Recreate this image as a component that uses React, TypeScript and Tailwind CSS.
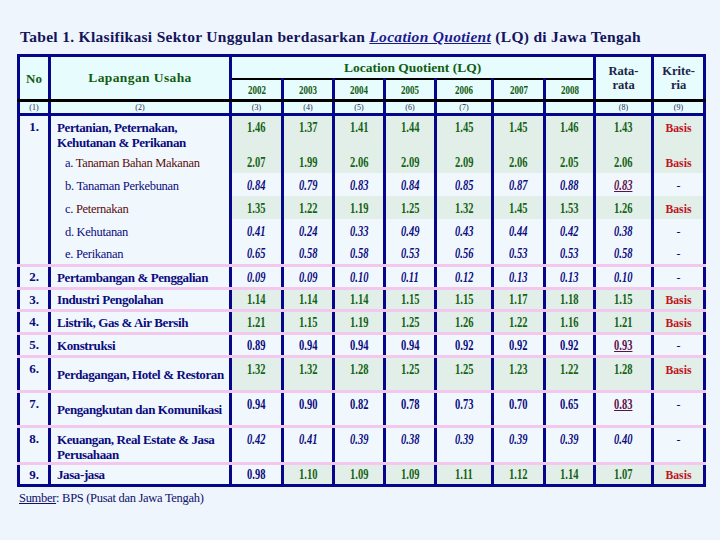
const years = ['2002', '2003', '2004', '2005', '2006', '2007', '2008'];
const idx = ['(3)', '(4)', '(5)', '(6)', '(7)', '', ''];

type Row = {
  no?: string;
  label: string;
  sub?: { prefix: string; maroon?: boolean };
  lines?: string[];
  vals: string[];
  avg: string;
  under?: boolean;
  italic?: boolean;
  h: string;
  tall?: boolean;
  noSpan?: number;
  skipNo?: boolean;
};

const rows: Row[] = [
  { no: '1.', label: '', lines: ['Pertanian, Peternakan,', 'Kehutanan & Perikanan'], vals: ['1.46', '1.37', '1.41', '1.44', '1.45', '1.45', '1.46'], avg: '1.43', h: 'h-[32px]', tall: true, noSpan: 6 },
  { label: 'Tanaman Bahan Makanan', sub: { prefix: 'a.', maroon: true }, vals: ['2.07', '1.99', '2.06', '2.09', '2.09', '2.06', '2.05'], avg: '2.06', h: 'h-[23px]', skipNo: true },
  { label: 'Tanaman Perkebunan', sub: { prefix: 'b.' }, vals: ['0.84', '0.79', '0.83', '0.84', '0.85', '0.87', '0.88'], avg: '0.83', under: true, italic: true, h: 'h-[23px]', skipNo: true },
  { label: 'Peternakan', sub: { prefix: 'c.', maroon: true }, vals: ['1.35', '1.22', '1.19', '1.25', '1.32', '1.45', '1.53'], avg: '1.26', h: 'h-[23px]', skipNo: true },
  { label: 'Kehutanan', sub: { prefix: 'd.' }, vals: ['0.41', '0.24', '0.33', '0.49', '0.43', '0.44', '0.42'], avg: '0.38', italic: true, h: 'h-[23px]', skipNo: true },
  { label: 'Perikanan', sub: { prefix: 'e.' }, vals: ['0.65', '0.58', '0.58', '0.53', '0.56', '0.53', '0.53'], avg: '0.58', italic: true, h: 'h-[23px]', skipNo: true },
  { no: '2.', label: 'Pertambangan & Penggalian', vals: ['0.09', '0.09', '0.10', '0.11', '0.12', '0.13', '0.13'], avg: '0.10', italic: true, h: 'h-[23px]' },
  { no: '3.', label: 'Industri Pengolahan', vals: ['1.14', '1.14', '1.14', '1.15', '1.15', '1.17', '1.18'], avg: '1.15', h: 'h-[22px]' },
  { no: '4.', label: 'Listrik, Gas & Air Bersih', vals: ['1.21', '1.15', '1.19', '1.25', '1.26', '1.22', '1.16'], avg: '1.21', h: 'h-[23px]' },
  { no: '5.', label: 'Konstruksi', vals: ['0.89', '0.94', '0.94', '0.94', '0.92', '0.92', '0.92'], avg: '0.93', under: true, h: 'h-[23px]' },
  { no: '6.', label: 'Perdagangan, Hotel & Restoran', vals: ['1.32', '1.32', '1.28', '1.25', '1.25', '1.23', '1.22'], avg: '1.28', h: 'h-[35px]', tall: true },
  { no: '7.', label: 'Pengangkutan dan Komunikasi', vals: ['0.94', '0.90', '0.82', '0.78', '0.73', '0.70', '0.65'], avg: '0.83', under: true, h: 'h-[35px]', tall: true },
  { no: '8.', label: '', lines: ['Keuangan, Real Estate & Jasa', 'Perusahaan'], vals: ['0.42', '0.41', '0.39', '0.38', '0.39', '0.39', '0.39'], avg: '0.40', italic: true, h: 'h-[34px]', tall: true },
  { no: '9.', label: 'Jasa-jasa', vals: ['0.98', '1.10', '1.09', '1.09', '1.11', '1.12', '1.14'], avg: '1.07', h: 'h-[22px]' },
];

function Num({ v, italic, under }: { v: string; italic?: boolean; under?: boolean }) {
  const hi = parseFloat(v) >= 1;
  const color = under ? 'text-[#5a1048] underline' : hi ? 'text-[#136313]' : 'text-[#0b0b7e]';
  return (
    <span className={`inline-block scale-x-75 text-[14px] font-bold ${color} ${italic && !hi ? 'italic' : ''}`}>{v}</span>
  );
}

export default function App() {
  const vline = 'border-x-[3px] border-x-[#06068c]';
  const pink = 'border-b-[3px] border-b-[#f2c8ee]';
  return (
    <div className="w-[720px] h-[540px] bg-[#eef5fd] overflow-hidden" style={{ fontFamily: '"Liberation Serif", "Times New Roman", serif' }}>
      <h1 className="pt-[28px] pl-[20px] text-[15.5px] leading-[18px] font-bold text-[#14145a] tracking-[0.3px] whitespace-nowrap">
        Tabel 1. Klasifikasi Sektor Unggulan berdasarkan <span className="italic underline text-[#1a1a8c]">Location Quotient</span> (LQ) di Jawa Tengah
      </h1>

      <table className="ml-[17px] mt-[8px] w-[686px] table-fixed border-collapse border-[3px] border-[#06068c] leading-none">
        <colgroup>
          <col className="w-[31px]" />
          <col className="w-[181px]" />
          <col className="w-[52px]" />
          <col className="w-[51px]" />
          <col className="w-[51px]" />
          <col className="w-[51px]" />
          <col className="w-[57px]" />
          <col className="w-[52px]" />
          <col className="w-[50px]" />
          <col className="w-[58px]" />
          <col className="w-[52px]" />
        </colgroup>
        <thead className="bg-[#e7fcfc]">
          <tr className="h-[23px]">
            <th rowSpan={2} className={`${vline} text-[13px] font-bold text-[#135c13] border-b-[3px] border-b-black`}>No</th>
            <th rowSpan={2} className={`${vline} text-[13.5px] font-bold text-[#135c13] border-b-[3px] border-b-black tracking-[0.4px]`}>Lapangan Usaha</th>
            <th colSpan={7} className={`${vline} text-[13.5px] font-bold text-[#135c13] border-b-2 border-b-black`}>Location Quotient (LQ)</th>
            <th rowSpan={2} className={`${vline} text-[12.5px] font-bold text-[#1c2448] leading-[14px] border-b-[3px] border-b-black`}>Rata-<br />rata</th>
            <th rowSpan={2} className={`${vline} text-[12.5px] font-bold text-[#1c2448] leading-[14px] border-b-[3px] border-b-black`}>Krite-<br />ria</th>
          </tr>
          <tr className="h-[22px]">
            {years.map((y) => (
              <th key={y} className={`${vline} border-b-[3px] border-b-black`}>
                <span className="inline-block scale-x-75 text-[12px] font-bold text-[#135c13]">{y}</span>
              </th>
            ))}
          </tr>
          <tr className="h-[14px] text-[8px] font-normal text-[#1c1c50]">
            <td className={`${vline} text-center border-b-[3px] border-b-[#06068c]`}>(1)</td>
            <td className={`${vline} text-center border-b-[3px] border-b-[#06068c]`}>(2)</td>
            {idx.map((s, i) => (
              <td key={i} className={`${vline} text-center border-b-[3px] border-b-[#06068c]`}>{s}</td>
            ))}
            <td className={`${vline} text-center border-b-[3px] border-b-[#06068c]`}>(8)</td>
            <td className={`${vline} text-center border-b-[3px] border-b-[#06068c]`}>(9)</td>
          </tr>
        </thead>
        <tbody className="bg-[#f1f8fd] text-[#0b0b7e]">
          {rows.map((r, ri) => {
            const top = !!r.lines;
            const bottom = ri >= 5 && ri !== rows.length - 1 ? pink : '';
            const cellB = ri === 0 ? '' : bottom;
            const isBasis = parseFloat(r.avg) >= 1;
            const numAlign = r.tall ? 'align-top pt-[3px]' : 'align-middle';
            return (
              <tr key={ri} className={r.h}>
                {!r.skipNo && (
                  <td rowSpan={r.noSpan} className={`${vline} ${r.noSpan ? pink : bottom} text-center text-[13px] font-bold ${r.tall ? 'align-top pt-[4px]' : 'align-middle'}`}>
                    {r.no}
                  </td>
                )}
                <td className={`${vline} ${cellB} pl-[6px] ${top ? 'align-top pt-[4px]' : 'align-middle'}`}>
                  {r.sub ? (
                    <span className="pl-[8px] text-[12.5px] font-normal tracking-[-0.3px]">
                      {r.sub.prefix}{' '}
                      <span className={r.sub.maroon ? 'text-[#5a0c0c]' : ''}>{r.label}</span>
                    </span>
                  ) : r.lines ? (
                    <div className="text-[13px] font-bold tracking-[-0.4px] leading-[15px]">
                      {r.lines.map((l) => <div key={l}>{l}</div>)}
                    </div>
                  ) : (
                    <span className="text-[13px] font-bold tracking-[-0.4px]">{r.label}</span>
                  )}
                </td>
                {r.vals.map((v, vi) => (
                  <td key={vi} className={`${vline} ${cellB} text-center ${numAlign} ${parseFloat(v) >= 1 ? 'bg-[#e2eee8]' : ''}`}>
                    <Num v={v} italic={r.italic} />
                  </td>
                ))}
                <td className={`${vline} ${cellB} text-center ${numAlign} ${isBasis ? 'bg-[#e2eee8]' : ''}`}>
                  <Num v={r.avg} italic={r.italic} under={r.under} />
                </td>
                <td className={`${vline} ${cellB} text-center ${numAlign} ${isBasis ? 'bg-[#e2eee8]' : ''}`}>
                  {isBasis ? (
                    <span className="inline-block scale-x-90 text-[13px] font-bold text-[#c0141c]">Basis</span>
                  ) : (
                    <span className="text-[12px] text-[#0b0b7e]">-</span>
                  )}
                </td>
              </tr>
            );
          })}
        </tbody>
      </table>
      <div className="pl-[19px] pt-[2px] text-[12.5px] text-[#10106a] tracking-[-0.3px]">
        <span className="underline">Sumber</span>: BPS (Pusat dan Jawa Tengah)
      </div>
    </div>
  );
}
